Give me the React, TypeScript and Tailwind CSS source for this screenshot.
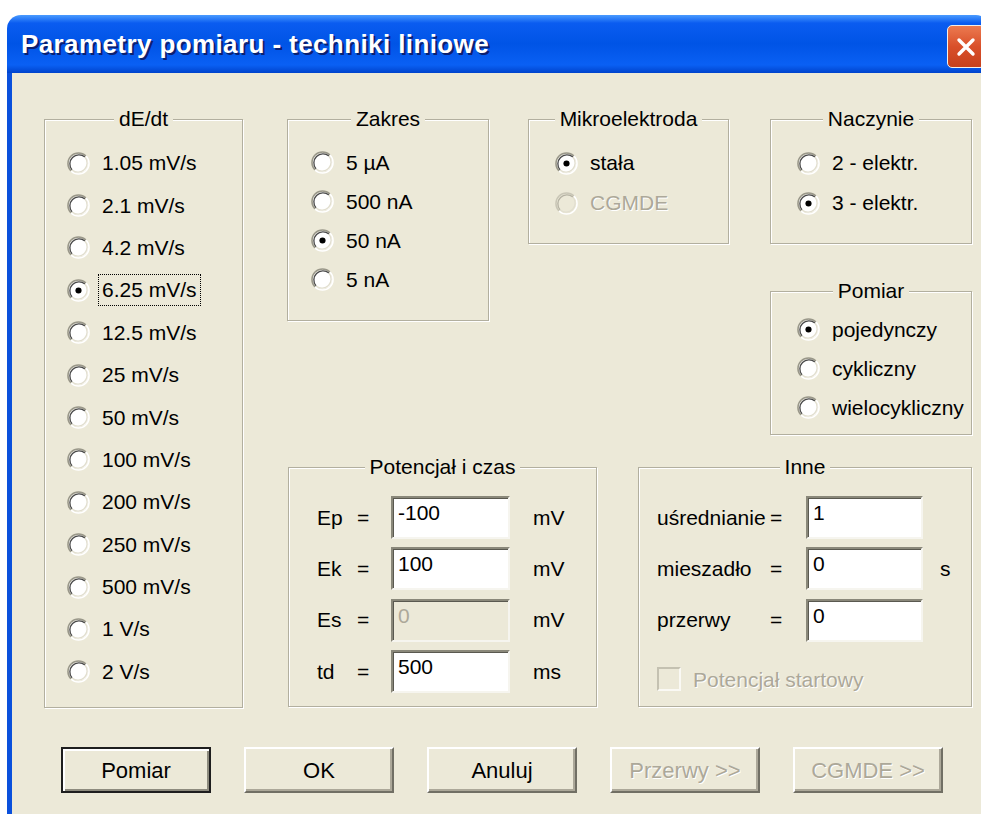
import type { ReactNode } from 'react';

type RadioProps = {
    checked?: boolean;
    disabled?: boolean;
};

// classic sunken radio: dark arcs top-left, light arcs bottom-right
function Radio({ checked, disabled }: RadioProps) {
    return (
        <svg width="23" height="23" viewBox="0 0 24 24" className="shrink-0">
            <circle cx="12" cy="12" r="10" fill={disabled ? '#ece9d8' : '#ffffff'} />
            <path d="M4.22 19.78 A11 11 0 0 1 19.78 4.22" fill="none" stroke={disabled ? '#c9c6b6' : '#9a988a'} strokeWidth="1.6" />
            <path d="M5.3 18.7 A9.5 9.5 0 0 1 18.7 5.3" fill="none" stroke={disabled ? '#b5b2a3' : '#4a4a4a'} strokeWidth="1.4" />
            <path d="M19.78 4.22 A11 11 0 0 1 4.22 19.78" fill="none" stroke="#ffffff" strokeWidth="1.6" />
            <path d="M18.7 5.3 A9.5 9.5 0 0 1 5.3 18.7" fill="none" stroke="#e2dfd0" strokeWidth="1.4" />
            {checked && <circle cx="12" cy="12" r="3.2" fill="#000000" />}
        </svg>
    );
}

type RadioRowProps = {
    label: string;
    checked?: boolean;
    disabled?: boolean;
    focus?: boolean;
    rowClass: string;
};

function RadioRow({ label, checked, disabled, focus, rowClass }: RadioRowProps) {
    let textClass = 'ml-[12px] leading-[24px]';
    if (focus) textClass = 'ml-[8px] leading-[24px] border border-dotted border-black px-[3px] py-[3px]';
    if (disabled) textClass += ' text-[#aca899] [text-shadow:1px_1px_0_#fff]';
    return (
        <div className={`flex items-center ${rowClass}`}>
            <Radio checked={checked} disabled={disabled} />
            <span className={textClass}>{label}</span>
        </div>
    );
}

type GroupBoxProps = {
    title: string;
    className: string;
    children: ReactNode;
};

function GroupBox({ title, className, children }: GroupBoxProps) {
    return (
        <div className={`relative shrink-0 border border-[#b2af9f] shadow-[inset_1px_1px_0_#fff,1px_1px_0_#fff] ${className}`}>
            <div className="absolute inset-x-0 -top-[13px] flex justify-center">
                <span className="bg-[#ece9d8] px-[5px] leading-[24px]">{title}</span>
            </div>
            {children}
        </div>
    );
}

type FieldProps = {
    value: string;
    disabled?: boolean;
    width: string;
};

function Field({ value, disabled, width }: FieldProps) {
    return (
        <div
            className={`h-[43px] ${width} border-2 border-t-[#8a887a] border-l-[#8a887a] border-r-[#f6f5ef] border-b-[#f6f5ef] shadow-[inset_1px_1px_0_#5a5950] pl-[5px] pt-[3px] leading-[24px] ${
                disabled ? 'bg-[#ece9d8] text-[#aca899]' : 'bg-white text-black'
            }`}
        >
            {value}
        </div>
    );
}

const rates = ['1.05 mV/s', '2.1 mV/s', '4.2 mV/s', '6.25 mV/s', '12.5 mV/s', '25 mV/s', '50 mV/s', '100 mV/s', '200 mV/s', '250 mV/s', '500 mV/s', '1 V/s', '2 V/s'];
const ranges = ['5 µA', '500 nA', '50 nA', '5 nA'];

const potentials = [
    { name: 'Ep', value: '-100', unit: 'mV' },
    { name: 'Ek', value: '100', unit: 'mV' },
    { name: 'Es', value: '0', unit: 'mV', disabled: true },
    { name: 'td', value: '500', unit: 'ms' },
];

const others = [
    { name: 'uśrednianie', value: '1', unit: '' },
    { name: 'mieszadło', value: '0', unit: 's' },
    { name: 'przerwy', value: '0', unit: '' },
];

type ButtonProps = {
    label: string;
    isDefault?: boolean;
    disabled?: boolean;
};

function DialogButton({ label, isDefault, disabled }: ButtonProps) {
    const frame = isDefault
        ? 'border-2 border-[#1e1e1e] shadow-[inset_2px_2px_0_#fff,inset_-2px_-2px_0_#8d8b7e]'
        : 'border-2 border-t-white border-l-white border-r-[#716f64] border-b-[#716f64] shadow-[inset_-2px_-2px_0_#aca899]';
    return (
        <div className={`flex h-[46px] w-[150px] items-center justify-center bg-[#ece9d8] text-[22px] ${frame} ${disabled ? 'text-[#aca899] [text-shadow:1px_1px_0_#fff]' : 'text-black'}`}>
            {label}
        </div>
    );
}

export default function App() {
    return (
        <div className="h-[814px] w-full overflow-hidden bg-white font-['Liberation_Sans',Arial,sans-serif]">
            <div className="ml-[7px] mt-[15px] w-[983px]">
                {/* title bar */}
                <div className="flex h-[58px] rounded-tl-[14px] rounded-tr-[14px] bg-[linear-gradient(to_bottom,#4a9bff_0%,#0a5cf0_14%,#0054e6_50%,#0a60f4_86%,#0043cc_100%)]">
                    <div className="pl-[14px] pt-[14px] text-[26px] font-bold leading-[30px] tracking-[0.4px] text-white [text-shadow:2px_2px_0_#0b2070]">
                        Parametry pomiaru - techniki liniowe
                    </div>
                    <div className="ml-auto mr-[5px] mt-[10px] flex h-[43px] w-[38px] items-center justify-center rounded-[5px] border-[1.5px] border-[#f4efe8] bg-[linear-gradient(to_bottom,#ec7a50,#d9502a_50%,#c6401c)]">
                        <svg width="20" height="20" viewBox="0 0 20 20">
                            <path d="M3 3 L17 17 M17 3 L3 17" stroke="#ffffff" strokeWidth="3.4" strokeLinecap="round" />
                        </svg>
                    </div>
                </div>

                {/* dialog body */}
                <div className="h-[760px] border-x-[5px] border-[#0a50dc] bg-[#ece9d8] pl-[32px] pt-[46px] text-[21px] text-black">
                    <div className="flex gap-[44px]">
                        <GroupBox title="dE/dt" className="h-[589px] w-[199px] pl-[22px] pt-[22px]">
                            {rates.map((r) => (
                                <RadioRow key={r} label={r} checked={r === '6.25 mV/s'} focus={r === '6.25 mV/s'} rowClass="h-[42.4px]" />
                            ))}
                        </GroupBox>

                        <div className="flex flex-col gap-[32px]">
                            <div className="flex h-[316px] items-start">
                                <GroupBox title="Zakres" className="h-[202px] w-[202px] pl-[23px] pt-[23px]">
                                    {ranges.map((r) => (
                                        <RadioRow key={r} label={r} checked={r === '50 nA'} rowClass="h-[39px]" />
                                    ))}
                                </GroupBox>

                                <GroupBox title="Mikroelektroda" className="ml-[39px] h-[125px] w-[201px] pl-[26px] pt-[23px]">
                                    <RadioRow label="stała" checked rowClass="h-[40px]" />
                                    <RadioRow label="CGMDE" disabled rowClass="h-[40px]" />
                                </GroupBox>

                                <div className="ml-[41px] flex flex-col gap-[47px]">
                                    <GroupBox title="Naczynie" className="h-[125px] w-[202px] pl-[26px] pt-[23px]">
                                        <RadioRow label="2 - elektr." rowClass="h-[40px]" />
                                        <RadioRow label="3 - elektr." checked rowClass="h-[40px]" />
                                    </GroupBox>
                                    <GroupBox title="Pomiar" className="h-[144px] w-[202px] pl-[26px] pt-[18px]">
                                        <RadioRow label="pojedynczy" checked rowClass="h-[39px]" />
                                        <RadioRow label="cykliczny" rowClass="h-[39px]" />
                                        <RadioRow label="wielocykliczny" rowClass="h-[39px]" />
                                    </GroupBox>
                                </div>
                            </div>

                            <div className="flex">
                                <GroupBox title="Potencjał i czas" className="ml-px h-[240px] w-[309px] pl-[28px] pt-[28px]">
                                    <div className="grid grid-cols-[40px_34px_119px_23px_auto] items-center gap-y-[8.3px]">
                                        {potentials.map((p) => (
                                            <div key={p.name} className="contents">
                                                <span>{p.name}</span>
                                                <span>=</span>
                                                <Field value={p.value} disabled={p.disabled} width="w-[119px]" />
                                                <span />
                                                <span>{p.unit}</span>
                                            </div>
                                        ))}
                                    </div>
                                </GroupBox>

                                <GroupBox title="Inne" className="ml-[41px] h-[240px] w-[334px] pl-[18px] pt-[28px]">
                                    <div className="grid grid-cols-[113px_36px_117px_17px_auto] items-center gap-y-[8.3px]">
                                        {others.map((o) => (
                                            <div key={o.name} className="contents">
                                                <span>{o.name}</span>
                                                <span>=</span>
                                                <Field value={o.value} width="w-[117px]" />
                                                <span />
                                                <span>{o.unit}</span>
                                            </div>
                                        ))}
                                    </div>
                                    <div className="mt-[22px] flex items-center">
                                        <div className="h-[24px] w-[24px] border-2 border-t-[#c4c1b1] border-l-[#c4c1b1] border-r-[#faf9f4] border-b-[#faf9f4] bg-[#ece9d8]" />
                                        <span className="ml-[12px] text-[#aca899] [text-shadow:1px_1px_0_#fff]">Potencjał startowy</span>
                                    </div>
                                </GroupBox>
                            </div>
                        </div>
                    </div>

                    <div className="ml-[17px] mt-[39px] flex gap-[33px]">
                        <DialogButton label="Pomiar" isDefault />
                        <DialogButton label="OK" />
                        <DialogButton label="Anuluj" />
                        <DialogButton label="Przerwy >>" disabled />
                        <DialogButton label="CGMDE >>" disabled />
                    </div>
                </div>
            </div>
        </div>
    );
}
